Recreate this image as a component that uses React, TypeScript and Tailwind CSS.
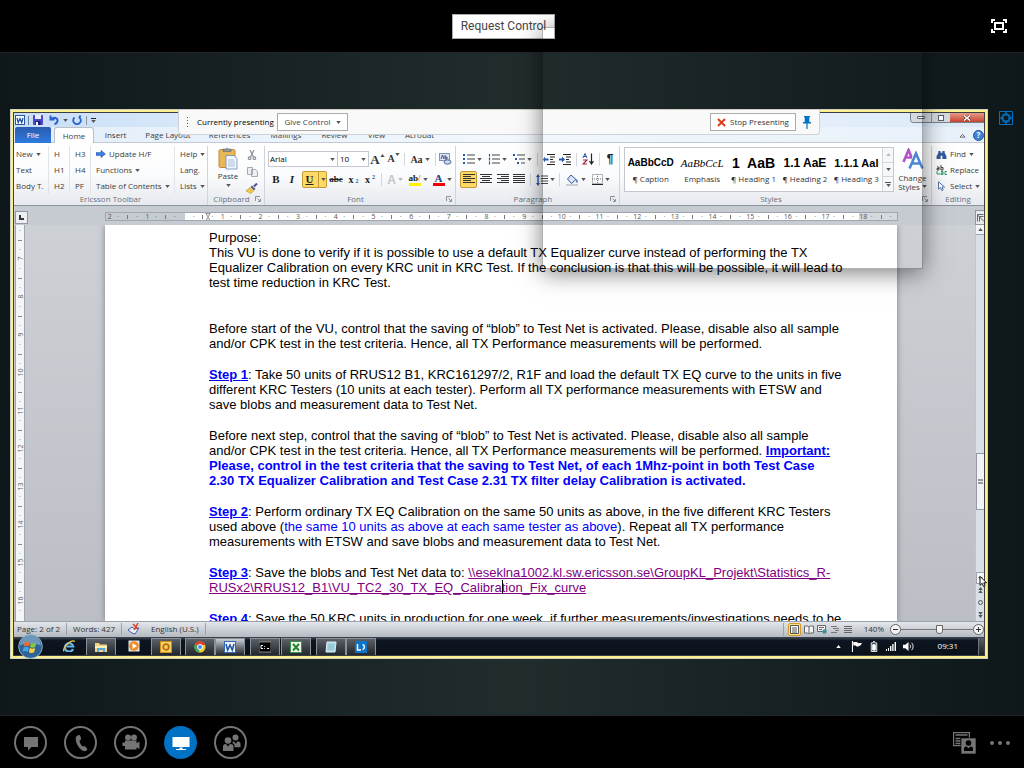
import type { ReactNode } from "react";

const UI = "font-['Open_Sans','Noto_Sans',sans-serif]";

function Caret({ className = "" }: { className?: string }) {
  return (
    <svg viewBox="0 0 6 4" className={`h-[3px] w-[5px] shrink-0 fill-[#555] ${className}`} aria-hidden="true">
      <path d="M0 0h6L3 4z" />
    </svg>
  );
}

function Launcher() {
  return (
    <svg viewBox="0 0 6 6" className="mr-[3px] size-[6px]" fill="none" stroke="#8b919b" aria-hidden="true">
      <path d="M.5 5V.5H5M2.500 2.500l2.500 2.500M5.500 3v2.500H3" />
    </svg>
  );
}

function Sep() {
  return <span className="mx-[3px] h-[13px] w-px shrink-0 bg-[#d3d7dd]" />;
}

function Tool({ label, className = "", children }: { label: string; className?: string; children: ReactNode }) {
  return (
    <button type="button" aria-label={label} className={`flex h-[17px] shrink-0 items-center justify-center gap-[2px] ${className}`}>
      {children}
    </button>
  );
}

function Group({ name, className = "", launcher = false, children }: { name: string; className?: string; launcher?: boolean; children: ReactNode }) {
  return (
    <section className={`flex flex-col border-r border-[#d0d4da] ${className}`}>
      <div className="h-[47px]">{children}</div>
      <div className="flex h-[11px] items-center text-[8px] leading-[11px] text-[#6b717c]">
        <span className="flex-1 text-center">{name}</span>
        {launcher && <Launcher />}
      </div>
    </section>
  );
}

function MacroColumn({ items, className = "" }: { items: { t: string; menu?: boolean; arrow?: boolean }[]; className?: string }) {
  return (
    <div className={`flex shrink-0 flex-col ${className}`}>
      {items.map((i) => (
        <button key={i.t} type="button" className="flex h-[16px] items-center gap-[3px] text-left text-[8px] whitespace-nowrap text-[#3b3b3b]">
          {i.arrow && (
            <svg viewBox="0 0 10 8" className="h-[8px] w-[10px]" aria-hidden="true">
              <path d="M0 2.500h5V.3L9.500 4 5 7.700V5.500H0z" fill="#3f7be0" stroke="#2a5db8" strokeWidth=".5" />
            </svg>
          )}
          {i.t}
          {i.menu && <Caret />}
        </button>
      ))}
    </div>
  );
}

function Lines({ widths, align = "left" }: { widths: number[]; align?: "left" | "center" | "right" }) {
  return (
    <svg viewBox="0 0 12 11" className="h-[11px] w-[12px]" fill="#333" aria-hidden="true">
      {widths.map((w, i) => (
        <rect key={i} x={align === "left" ? 0 : align === "center" ? (12 - w) / 2 : 12 - w} y={i * 2} width={w} height="1" />
      ))}
    </svg>
  );
}

function ListIcon({ kind }: { kind: "bullet" | "number" | "multi" }) {
  return (
    <svg viewBox="0 0 12 11" className="h-[11px] w-[12px]" aria-hidden="true">
      {[0, 1, 2].map((i) => (
        <g key={i}>
          {kind === "bullet" && <rect x="0" y={i * 4} width="2" height="2" fill="#2b57a8" />}
          {kind === "number" && <path d={`M1.500 ${i * 4 - 0.5}v3`} stroke="#2b57a8" strokeWidth="1.200" />}
          {kind === "multi" && <rect x={i * 2} y={i * 4} width="2" height="2" fill="#2b57a8" />}
          <rect x={kind === "multi" ? 4 + i * 2 : 4} y={i * 4 + 0.5} width={kind === "multi" ? 8 - i * 2 : 8} height="1" fill="#444" />
        </g>
      ))}
    </svg>
  );
}

function Indent({ dir }: { dir: "in" | "out" }) {
  return (
    <svg viewBox="0 0 12 11" className="h-[11px] w-[12px]" aria-hidden="true">
      <path d="M4 .5h8M7 3h5M7 5.500h3M7 8h5M4 10.500h8" stroke="#222" strokeWidth="1.200" />
      <path d={dir === "out" ? "M5.500 4.500H2V2.500L0 5.500l2 3v-2h3.500z" : "M0 4.500h3V2.500l3 3-3 3v-2H0z"} fill="#2b57a8" />
    </svg>
  );
}

function TitleBar() {
  return (
    <div className="flex h-[14px] items-center bg-linear-to-r from-[#c8def6] via-[#f3f8fd] to-[#dbe9f8] pl-px">
      <svg viewBox="0 0 10 10" className="size-[10px]" aria-hidden="true">
        <rect x=".5" y=".5" width="9" height="9" fill="#fff" stroke="#2b57a8" />
        <path d="M2 3l1.200 4.500L5 3.500l1.700 4L8 3" fill="none" stroke="#1d4fa5" strokeWidth="1.300" />
      </svg>
      <span className="mx-[3px] h-[9px] w-px bg-[#6d7f99]" />
      <button type="button" aria-label="Save" className="mx-px">
        <svg viewBox="0 0 10 10" className="size-[10px]" aria-hidden="true">
          <rect width="10" height="10" rx="1" fill="#4a48c8" />
          <rect x="2" width="6" height="4" fill="#e9eefb" />
          <rect x="2.500" y="6" width="5" height="4" fill="#20206a" />
          <rect x="3" y="7" width="2" height="3" fill="#fff" />
        </svg>
      </button>
      <button type="button" aria-label="Undo" className="ml-[5px] flex items-center gap-[4px]">
        <svg viewBox="0 0 10 10" className="size-[10px]" fill="none" stroke="#2a62d0" strokeWidth="2" aria-hidden="true">
          <path d="M1.500 .5v4H5.500M2 4.200C5 1.500 9 3 8.500 6c-.3 1.600-1.500 2.600-3 3.200" />
        </svg>
        <Caret className="fill-[#222]" />
      </button>
      <button type="button" aria-label="Repeat" className="ml-[4px]">
        <svg viewBox="0 0 10 10" className="size-[10px]" fill="none" stroke="#2a62d0" strokeWidth="1.800" aria-hidden="true">
          <path d="M2.500 2.500A3.800 3.800 0 1 0 7.500 2.500M8.500 0.500L7 3.500" />
        </svg>
      </button>
      <span className="mx-[4px] h-[9px] w-px bg-[#8896aa]" />
      <button type="button" aria-label="Customize toolbar" className="flex flex-col items-center gap-px">
        <span className="h-px w-[5px] bg-[#222]" />
        <Caret className="fill-[#222]" />
      </button>
      <div className="ml-auto flex h-[10px] self-start overflow-hidden rounded-bl-[4px] border-b border-l border-[#7b7f87]">
        <button type="button" aria-label="Minimize" className="flex w-[20px] items-center justify-center bg-[#d5dae2]">
          <span className="h-[3px] w-[8px] rounded-[1px] border border-[#59606b] bg-white" />
        </button>
        <button type="button" aria-label="Restore" className="flex w-[19px] items-center justify-center border-l border-[#9298a3] bg-[#d5dae2]">
          <span className="size-[6px] border border-[#59606b] bg-white" />
        </button>
        <button type="button" aria-label="Close" className="flex w-[34px] items-center justify-center bg-linear-to-b from-[#e59a8b] to-[#c4432f]">
          <svg viewBox="0 0 8 6" className="h-[6px] w-[8px]" aria-hidden="true">
            <path d="M1 .5l6 5M7 .5l-6 5" stroke="#5d2018" strokeWidth="2.600" />
            <path d="M1 .5l6 5M7 .5l-6 5" stroke="#fff" strokeWidth="1.600" />
          </svg>
        </button>
      </div>
    </div>
  );
}

function Tabs() {
  const tabs: [string, string][] = [
    ["Insert", "w-[43px]"],
    ["Page Layout", "w-[62px]"],
    ["References", "w-[61px]"],
    ["Mailings", "w-[52px]"],
    ["Review", "w-[45px]"],
    ["View", "w-[39px]"],
    ["Acrobat", "w-[47px]"],
  ];
  return (
    <nav className="flex h-[16px] bg-linear-to-r from-[#e3eefa] via-[#f1f7fd] to-[#e8f0f9] text-[8px] text-[#3b3b3b] shadow-[inset_0_-1px_0_#c3cad3]">
      <button type="button" className="ml-px w-[36px] rounded-t-[2px] bg-linear-to-b from-[#2a5cae] to-[#2d7be0] text-white">File</button>
      <button type="button" className="ml-[3px] w-[40px] rounded-t-[3px] border border-b-0 border-[#b9c0ca] bg-white">Home</button>
      {tabs.map(([t, w]) => (
        <button key={t} type="button" className={`${w} whitespace-nowrap`}>{t}</button>
      ))}
      <span className="ml-auto flex items-center gap-[7px]">
        <svg viewBox="0 0 8 6" className="h-[5px] w-[7px]" fill="none" stroke="#555" aria-hidden="true">
          <path d="M1 5L4 1.500 7 5z" />
        </svg>
        <button type="button" aria-label="Help" className="flex size-[11px] items-center justify-center rounded-full border border-[#1f5aa8] bg-[#3d82d8] text-[8px] font-bold text-white">?</button>
      </span>
    </nav>
  );
}

const styleItems = [
  { s: "AaBbCcD", n: "¶ Caption", c: "text-[10px] font-bold font-['Liberation_Sans',sans-serif]" },
  { s: "AaBbCcL", n: "Emphasis", c: "text-[11px] italic font-['Liberation_Serif',serif]" },
  { s: "1  AaB", n: "¶ Heading 1", c: "text-[14px] font-bold font-['Liberation_Sans',sans-serif]" },
  { s: "1.1 AaE", n: "¶ Heading 2", c: "text-[12px] font-bold font-['Liberation_Sans',sans-serif]" },
  { s: "1.1.1 Aal", n: "¶ Heading 3", c: "text-[11px] font-bold font-['Liberation_Sans',sans-serif]" },
];

function Ribbon() {
  return (
    <div className="flex h-[63px] border-b border-[#8d939d] bg-linear-to-b from-white via-[#fbfcfd] to-[#e6e9ee] pt-[3px]">
      <Group name="Ericsson Toolbar" className="w-[194px]">
        <div className="flex gap-[5px] pl-[2px]">
          <MacroColumn className="w-[33px] border-r border-[#e0e3e8]" items={[{ t: "New", menu: true }, { t: "Text" }, { t: "Body T." }]} />
          <MacroColumn className="w-[16px] border-r border-[#e0e3e8]" items={[{ t: "H" }, { t: "H1" }, { t: "H2" }]} />
          <MacroColumn className="w-[16px] border-r border-[#e0e3e8]" items={[{ t: "H3" }, { t: "H4" }, { t: "PF" }]} />
          <MacroColumn className="w-[79px] border-r border-[#e0e3e8]" items={[{ t: "Update H/F", arrow: true }, { t: "Functions", menu: true }, { t: "Table of Contents", menu: true }]} />
          <MacroColumn items={[{ t: "Help", menu: true }, { t: "Lang." }, { t: "Lists", menu: true }]} />
        </div>
      </Group>

      <Group name="Clipboard" launcher className="w-[57px]">
        <div className="flex justify-between pr-[6px] pl-[8px]">
          <button type="button" className="flex w-[24px] flex-col items-center text-[8px] leading-[11px] text-[#3b3b3b]">
            <svg viewBox="0 0 20 22" className="mt-px h-[23px] w-[20px]" aria-hidden="true">
              <rect x="1" y="2" width="16" height="18" rx="1.500" fill="#e9b856" stroke="#b98a35" />
              <path d="M5 4V1.500h2.500a1.800 1.800 0 0 1 3 0H13V4z" fill="#8f949c" stroke="#666" strokeWidth=".6" />
              <path d="M8 8h8l3 3v10.500H8z" fill="#f2f6fc" stroke="#6c8bb8" strokeWidth=".8" />
              <path d="M10 12.500h6M10 14.500h7M10 16.500h7M10 18.500h7" stroke="#90a9cf" strokeWidth=".7" />
            </svg>
            Paste
            <Caret className="mt-[3px]" />
          </button>
          <span className="flex flex-col items-center">
            <Tool label="Cut">
              <svg viewBox="0 0 10 10" className="size-[10px]" fill="none" stroke="#8b919a" strokeWidth="1.200" aria-hidden="true">
                <path d="M3 0l3.500 7M7 0L3.500 7" />
                <circle cx="2.600" cy="8.200" r="1.300" />
                <circle cx="7.400" cy="8.200" r="1.300" />
              </svg>
            </Tool>
            <Tool label="Copy">
              <svg viewBox="0 0 11 10" className="h-[10px] w-[11px]" fill="#eceef1" stroke="#a5aab2" aria-hidden="true">
                <path d="M.5.500h5v7h-5zM4.500 2.500h4l2 2v5h-6z" />
              </svg>
            </Tool>
            <Tool label="Format Painter">
              <svg viewBox="0 0 12 11" className="h-[11px] w-[12px]" aria-hidden="true">
                <path d="M8 3.500L11 .5" stroke="#4b4fa0" strokeWidth="2" />
                <path d="M6 2.500l3.500 3.500-1.500 1.500L4.500 4z" fill="#5a5f70" />
                <path d="M4 4.500L7.500 8 5 10.500 0 8z" fill="#efc94f" stroke="#b99325" strokeWidth=".6" />
              </svg>
            </Tool>
          </span>
        </div>
      </Group>

      <Group name="Font" launcher className="w-[191px]">
        <div className="flex flex-col gap-[4px] pt-[5px] pl-[3px]">
          <div className="flex h-[16px] items-center">
            <span className="relative flex">
              <select aria-label="Font" defaultValue="Arial" className="h-[16px] w-[70px] appearance-none border border-[#c3c8d0] bg-white pl-px text-[8px] text-black">
                <option>Arial</option>
              </select>
              <Caret className="pointer-events-none absolute top-[7px] right-[3px]" />
            </span>
            <span className="relative flex">
              <select aria-label="Font size" defaultValue="10" className="h-[16px] w-[31px] appearance-none border border-l-0 border-[#c3c8d0] bg-white pl-[2px] text-[8px] text-black">
                <option>10</option>
              </select>
              <Caret className="pointer-events-none absolute top-[7px] right-[3px]" />
            </span>
            <Tool label="Grow Font" className="w-[17px] font-['Liberation_Serif',serif] text-[13px] font-bold text-[#333]">
              <span className="flex items-start leading-[13px]">A<Caret className="mt-px rotate-180 fill-[#2b57a8]" /></span>
            </Tool>
            <Tool label="Shrink Font" className="w-[15px] font-['Liberation_Serif',serif] text-[10px] font-bold text-[#333]">
              <span className="flex items-start leading-[12px]">A<Caret className="fill-[#2b57a8]" /></span>
            </Tool>
            <Sep />
            <Tool label="Change Case" className="w-[24px] font-['Liberation_Serif',serif] text-[10px] font-bold text-[#333]">Aa<Caret /></Tool>
            <Sep />
            <Tool label="Clear Formatting">
              <svg viewBox="0 0 13 12" className="h-[12px] w-[13px]" aria-hidden="true">
                <rect x=".5" y=".5" width="10" height="7" fill="#dce6f5" stroke="#7d93bb" />
                <path d="M2 6l1.500-4L5 6M6 2v4h2V4H6" fill="none" stroke="#2c4270" strokeWidth=".9" />
                <ellipse cx="8.500" cy="9" rx="3.500" ry="2.200" fill="#c9d8ee" stroke="#50679a" />
              </svg>
            </Tool>
          </div>
          <div className="flex h-[17px] items-center font-['Liberation_Serif',serif] text-[10px] font-bold text-[#222]">
            <Tool label="Bold" className="w-[16px] text-[11px]">B</Tool>
            <Tool label="Italic" className="w-[16px] text-[11px] italic">I</Tool>
            <Tool label="Underline" className="ml-[2px] w-[25px] rounded-[2px] border border-[#c29a35] bg-[#ffd965] text-[11px] underline">
              <span className="w-[13px]">U</span>
              <span className="h-full w-px bg-[#c29a35]" />
              <Caret />
            </Tool>
            <Tool label="Strikethrough" className="w-[18px] text-[9px] line-through">abc</Tool>
            <Tool label="Subscript" className="w-[17px]">x<span className="pt-[4px] text-[6px] text-[#2b57a8]">2</span></Tool>
            <Tool label="Superscript" className="w-[16px]">x<span className="pb-[5px] text-[6px] text-[#2b57a8]">2</span></Tool>
            <Sep />
            <Tool label="Text Effects" className="w-[20px] font-['Liberation_Sans',sans-serif] text-[12px] text-[#c2c6cd]">A<Caret className="fill-[#b5b9c0]" /></Tool>
            <Tool label="Highlight" className="w-[26px]">
              <span className="flex flex-col items-center">
                <span className="text-[9px] leading-[8px]">ab<span className="text-[#b08a20]">/</span></span>
                <span className="mt-px h-[3px] w-[12px] bg-[#fff200]" />
              </span>
              <Caret />
            </Tool>
            <Tool label="Font Color" className="w-[22px]">
              <span className="flex flex-col items-center">
                <span className="text-[11px] leading-[9px] text-[#243f7c]">A</span>
                <span className="h-[3px] w-[12px] bg-[#f00000]" />
              </span>
              <Caret />
            </Tool>
          </div>
        </div>
      </Group>

      <Group name="Paragraph" launcher className="w-[164px]">
        <div className="flex flex-col gap-[4px] pt-[5px] pl-[4px]">
          <div className="flex h-[16px] items-center">
            <Tool label="Bullets" className="w-[25px]"><ListIcon kind="bullet" /><Caret /></Tool>
            <Tool label="Numbering" className="w-[25px]"><ListIcon kind="number" /><Caret /></Tool>
            <Tool label="Multilevel List" className="w-[24px]"><ListIcon kind="multi" /><Caret /></Tool>
            <Sep />
            <Tool label="Decrease Indent" className="w-[16px]"><Indent dir="out" /></Tool>
            <Tool label="Increase Indent" className="w-[16px]"><Indent dir="in" /></Tool>
            <Sep />
            <Tool label="Sort" className="w-[16px]">
              <svg viewBox="0 0 12 12" className="size-[12px]" fill="none" aria-hidden="true">
                <path d="M1 5l2-4.500L5 5M1.700 3.500h2.600" stroke="#2b57a8" />
                <path d="M1 7h4l-4 4h4" stroke="#a02c3c" strokeWidth="1.200" />
                <path d="M9.500.5v10M7.500 8l2 3 2-3" stroke="#222" strokeWidth="1.200" />
              </svg>
            </Tool>
            <Sep />
            <Tool label="Show marks" className="w-[14px] font-['Liberation_Sans',sans-serif] text-[12px] font-bold text-[#222]">¶</Tool>
          </div>
          <div className="flex h-[17px] items-center">
            <Tool label="Align Left" className="w-[17px] rounded-[2px] border border-[#c29a35] bg-[#ffd965]"><Lines widths={[12, 8, 12, 8, 12]} /></Tool>
            <Tool label="Center" className="w-[17px]"><Lines widths={[12, 8, 12, 8, 12]} align="center" /></Tool>
            <Tool label="Align Right" className="w-[17px]"><Lines widths={[12, 8, 12, 8, 12]} align="right" /></Tool>
            <Tool label="Justify" className="w-[16px]"><Lines widths={[12, 12, 12, 12, 12]} /></Tool>
            <Sep />
            <Tool label="Line Spacing" className="w-[22px]">
              <svg viewBox="0 0 12 12" className="size-[12px]" aria-hidden="true">
                <path d="M5 2h7M5 4.500h7M5 7h7M5 9.500h7" stroke="#444" />
                <path d="M2 0L0 3h1.300v6H0l2 3 2-3H2.700V3H4z" fill="#2b57a8" />
              </svg>
              <Caret />
            </Tool>
            <Sep />
            <Tool label="Shading" className="w-[25px]">
              <svg viewBox="0 0 13 12" className="h-[12px] w-[13px]" aria-hidden="true">
                <path d="M5 1l5 4.500-4.500 4L1.500 5z" fill="#dbe7f8" stroke="#35599c" />
                <path d="M10.500 5c1.500 1.500 1.500 3 .5 4-1-1-1-2.500-.5-4z" fill="#2b57a8" />
                <rect x="0" y="10" width="12" height="2" fill="#c9cdd4" />
              </svg>
              <Caret />
            </Tool>
            <Tool label="Borders" className="w-[25px]">
              <svg viewBox="0 0 11 11" className="size-[11px]" fill="none" stroke="#777" aria-hidden="true">
                <path d="M.5.500h10v9H.5zM5.500 0v10M0 5h11" strokeDasharray="1 1" />
                <path d="M0 10.500h11" stroke="#222" />
              </svg>
              <Caret />
            </Tool>
          </div>
        </div>
      </Group>

      <Group name="Styles" launcher className="min-w-0 flex-1">
        <div className="flex pt-px pl-[4px]">
          <div className="flex h-[45px] min-w-0 flex-1 border border-[#c3c8d0] bg-white">
            {styleItems.map((i) => (
              <button key={i.n} type="button" className="flex flex-1 flex-col items-center overflow-hidden whitespace-pre text-black">
                <span className={`mt-[6px] h-[18px] leading-[18px] ${i.c}`}>{i.s}</span>
                <span className="text-[8px] leading-[14px] text-[#333]">{i.n}</span>
              </button>
            ))}
            <span className="flex w-[11px] flex-col border-l border-[#d3d7dd] bg-[#f5f7f9]">
              <button type="button" aria-label="Previous styles" className="flex flex-1 items-center justify-center"><Caret className="rotate-180 fill-[#b8bcc4]" /></button>
              <button type="button" aria-label="Next styles" className="flex flex-1 items-center justify-center border-y border-[#d3d7dd]"><Caret /></button>
              <button type="button" aria-label="More styles" className="flex flex-1 flex-col items-center justify-center gap-px"><span className="h-px w-[6px] bg-[#555]" /><Caret /></button>
            </span>
          </div>
          <button type="button" className="flex w-[37px] flex-col items-center text-[8px] leading-[9px] text-[#3b3b3b]">
            <svg viewBox="0 0 22 22" className="mt-px mb-[3px] size-[22px]" fill="none" strokeWidth="2.600" aria-hidden="true">
              <path d="M1.500 14L6.500 2l5 12M3.500 9.500h6" stroke="#b454c8" />
              <path d="M7.500 20.500L14 5.500l6.500 15M10 15.500h8" stroke="#fff" strokeWidth="4" />
              <path d="M7.500 20.500L14 5.500l6.500 15M10 15.500h8" stroke="#4d86d6" />
            </svg>
            <span>Change</span>
            <span className="flex items-center gap-[2px]">Styles<Caret /></span>
          </button>
        </div>
      </Group>

      <section className="flex w-[52px] flex-col">
        <div className="h-[47px] pl-[4px] text-[8px] text-[#3b3b3b]">
          <button type="button" className="flex h-[16px] items-center gap-[3px]">
            <svg viewBox="0 0 11 10" className="h-[9px] w-[11px]" fill="#35599c" aria-hidden="true">
              <path d="M2 1h2.500v2h2V1H9v2l2 4v3H6.500V6.500h-2V10H0V7l2-4z" />
            </svg>
            Find <Caret />
          </button>
          <button type="button" className="flex h-[16px] items-center gap-[3px]">
            <svg viewBox="0 0 11 10" className="h-[10px] w-[11px]" fill="none" aria-hidden="true">
              <path d="M1 2h2v3H1V3.500h2M5 0v5h2V2.500H5" stroke="#444" />
              <path d="M1 6v3h3M5 6.500h2v3H5V8h2M11 6.500H9v3h2" stroke="#2d9a6a" />
            </svg>
            Replace
          </button>
          <button type="button" className="flex h-[16px] items-center gap-[3px]">
            <svg viewBox="0 0 11 10" className="h-[10px] w-[11px]" fill="#fff" stroke="#5773a8" aria-hidden="true">
              <path d="M2.500.8v7.400l2-1.700 1.200 3 1.500-.6L6 6h2.500z" />
            </svg>
            Select <Caret />
          </button>
        </div>
        <div className="h-[11px] text-center text-[8px] leading-[11px] text-[#6b717c]">Editing</div>
      </section>
    </div>
  );
}

function HorizontalRuler() {
  const cells = Array.from({ length: 21 }, (_, i) => i - 2);
  return (
    <div className="flex h-[19px] bg-[#c6cad1]">
      <span className="mt-[5px] ml-px flex h-[13px] w-[13px] items-center justify-center border border-[#9298a3] bg-[#eceef1]">
        <span className="size-[5px] border-b-2 border-l-2 border-[#333]" />
      </span>
      <div className="relative mt-[6px] mr-[77px] ml-[77px] flex h-[9px] flex-1 overflow-hidden border border-[#a0a6b0] bg-linear-to-r from-[#c6cad1] from-10% via-white via-10% to-white text-[7px] leading-[8px] text-[#555]">
        {cells.map((n) => (
          <span key={n} className={`flex min-w-0 flex-1 items-center ${n === 18 ? "bg-[#d5d8dd]" : ""}`}>
            <span className="flex w-1/5 justify-center">{n === 0 ? "" : Math.abs(n)}</span>
            <span className="flex w-1/4 justify-center">·</span>
            <span className="flex w-1/4 justify-center"><span className="h-[4px] w-px bg-[#777]" /></span>
            <span className="flex w-1/4 justify-center">·</span>
          </span>
        ))}
        <svg viewBox="0 0 8 12" className="absolute top-0 left-[98px] h-[9px] w-[8px]" fill="#eee" stroke="#777" aria-hidden="true">
          <path d="M1 .5h6L4 5zM1 10.500L4 5l3 5.500z" />
        </svg>
      </div>
      <button type="button" aria-label="View ruler" className="mt-[4px] flex h-[15px] w-[9px] items-center justify-center border-y border-l border-[#9298a3] bg-[#e6e9ee]">
        <svg viewBox="0 0 7 8" className="h-[8px] w-[7px]" fill="none" stroke="#666" aria-hidden="true">
          <path d="M.5 7.500V.5h6M2.500 7.500v-5h4M0 .5l7 7" />
        </svg>
      </button>
    </div>
  );
}

function VerticalRuler() {
  const marks = [7, 8, 9, 10, 11, 12, 13, 14, 15, 16];
  return (
    <div className="flex w-[10px] shrink-0 flex-col overflow-hidden border-x border-[#a0a6b0] bg-[#f4f5f7] text-[7px] leading-[7px] text-[#666]">
      {marks.map((n) => (
        <span key={n} className="flex h-[38px] shrink-0 flex-col items-center">
          <span className="flex h-[11px] items-center">·</span>
          <span className="flex h-[9px] items-center"><span className="h-px w-[4px] bg-[#888]" /></span>
          <span className="flex h-[9px] items-center">·</span>
          <span className="flex h-[9px] -rotate-90 items-center">{n}</span>
        </span>
      ))}
      <span className="flex h-[11px] shrink-0 items-center justify-center">·</span>
    </div>
  );
}

function StepLabel({ n }: { n: number }) {
  return <b className="text-[#0000ff] underline">Step {n}</b>;
}

function DocumentText() {
  return (
    <article className="min-w-0 flex-1 overflow-hidden bg-white pt-[5px] pl-[104px] font-['Liberation_Sans',Arial,sans-serif] text-[13px] leading-[15px] whitespace-nowrap text-black shadow-[0_0_6px_#7d828a]">
      <p className="mb-[31px]">
        Purpose:<br />
        This VU is done to verify if it is possible to use a default TX Equalizer curve instead of performing the TX<br />
        Equalizer Calibration on every KRC unit in KRC Test. If the conclusion is that this will be possible, it will lead to<br />
        test time reduction in KRC Test.
      </p>
      <p className="mb-[16px]">
        Before start of the VU, control that the saving of “blob” to Test Net is activated. Please, disable also all sample<br />
        and/or CPK test in the test criteria. Hence, all TX Performance measurements will be performed.
      </p>
      <p className="mb-[16px]">
        <StepLabel n={1} />: Take 50 units of RRUS12 B1, KRC161297/2, R1F and load the default TX EQ curve to the units in five<br />
        different KRC Testers (10 units at each tester). Perform all TX performance measurements with ETSW and<br />
        save blobs and measurement data to Test Net.
      </p>
      <p className="mb-[16px]">
        Before next step, control that the saving of “blob” to Test Net is activated. Please, disable also all sample<br />
        and/or CPK test in the test criteria. Hence, all TX Performance measurements will be performed.{" "}
        <b className="text-[#0000ff] underline">Important:</b><br />
        <b className="text-[#0000ff]">
          Please, control in the test criteria that the saving to Test Net, of each 1Mhz-point in both Test Case<br />
          2.30 TX Equalizer Calibration and Test Case 2.31 TX filter delay Calibration is activated.
        </b>
      </p>
      <p className="mb-[16px]">
        <StepLabel n={2} />: Perform ordinary TX EQ Calibration on the same 50 units as above, in the five different KRC Testers<br />
        used above (<span className="text-[#0000ff]">the same 10 units as above at each same tester as above</span>). Repeat all TX performance<br />
        measurements with ETSW and save blobs and measurement data to Test Net.
      </p>
      <p className="mb-[16px]">
        <StepLabel n={3} />: Save the blobs and Test Net data to:{" "}
        <a href="#share" className="text-[#800080] underline">
          \\eseklna1002.kl.sw.ericsson.se\GroupKL_Projekt\Statistics_R-<br />
          RUSx2\RRUS12_B1\VU_TC2_30_TX_EQ_Calibra<span className="relative">t<span className="absolute top-0 left-0 h-[14px] w-px bg-black" /></span>ion_Fix_curve
        </a>
      </p>
      <p>
        <StepLabel n={4} />: Save the 50 KRC units in production for one week, if further measurements/investigations needs to be
      </p>
    </article>
  );
}

function ScrollBar() {
  return (
    <div className="flex w-[9px] shrink-0 flex-col items-center border-l border-[#c0c5cd] bg-[#dbe0e8]">
      <button type="button" aria-label="Scroll up" className="flex h-[10px] w-full items-center justify-center border-b border-[#a0a6b0] bg-[#f3f4f6]"><Caret className="rotate-180 fill-[#222]" /></button>
      <span className="h-[218px]" />
      <span className="flex h-[57px] w-full flex-col items-center justify-center gap-px border border-r-0 border-[#959ba6] bg-[#f1f3f6]">
        <span className="h-[2px] w-[5px] bg-[#999]" />
        <span className="h-[2px] w-[5px] bg-[#999]" />
      </span>
      <span className="flex-1" />
      <button type="button" aria-label="Scroll down" className="flex h-[12px] w-full items-center justify-center border border-r-0 border-[#a0a6b0] bg-[#f3f4f6]"><Caret className="fill-[#222]" /></button>
      <button type="button" aria-label="Previous page" className="flex h-[12px] flex-col items-center justify-center"><Caret className="rotate-180 fill-[#333]" /><Caret className="rotate-180 fill-[#333]" /></button>
      <button type="button" aria-label="Browse object" className="flex h-[12px] items-center"><span className="size-[5px] rounded-full border border-[#555]" /></button>
      <button type="button" aria-label="Next page" className="flex h-[13px] flex-col items-center justify-center"><Caret className="fill-[#333]" /><Caret className="fill-[#333]" /></button>
    </div>
  );
}

function StatusBar() {
  return (
    <div className="flex h-[16px] items-center border-t border-[#9ba1ab] bg-linear-to-b from-[#e3e6ea] to-[#b5bac2] pb-px text-[8px] whitespace-nowrap text-[#333]">
      <span className="w-[53px] border-r border-[#9ba1ab] pl-[3px]">Page: 2 of 2</span>
      <span className="w-[55px] border-r border-[#9ba1ab] pl-[6px]">Words: 427</span>
      <svg viewBox="0 0 14 12" className="ml-[5px] h-[12px] w-[14px]" aria-hidden="true">
        <path d="M1 7l4-3 3 2 4-1-4 6-3-1z" fill="#e9eefb" stroke="#3c5fae" />
        <path d="M6 1l5 5M11 0L7 7" stroke="#e0402c" strokeWidth="1.500" />
      </svg>
      <span className="ml-[10px] w-[55px] border-r border-[#9ba1ab]">English (U.S.)</span>
      <div className="ml-auto flex items-center gap-[3px] border-l border-[#9ba1ab] pl-[4px]">
        <button type="button" aria-label="Print Layout" className="flex h-[13px] w-[13px] items-center justify-center rounded-[2px] border border-[#d59a20] bg-[#ffe08a]">
          <svg viewBox="0 0 9 9" className="size-[9px]" fill="#fff" stroke="#555" aria-hidden="true"><path d="M.5.500h8v8h-8zM2 3h5M2 5h5M2 7h5" /></svg>
        </button>
        <button type="button" aria-label="Full Screen Reading">
          <svg viewBox="0 0 10 9" className="h-[9px] w-[10px]" fill="#f4f4f4" stroke="#666" aria-hidden="true"><path d="M.5 1h3L5 2l1.500-1h3v7h-3L5 9 3.500 8h-3zM5 2v6" /></svg>
        </button>
        <button type="button" aria-label="Web Layout">
          <svg viewBox="0 0 10 9" className="h-[9px] w-[10px]" aria-hidden="true"><path d="M.5.500h8v6h-8zM2 2.500h5M2 4.500h3" fill="#f4f4f4" stroke="#666" /><circle cx="7.500" cy="6.500" r="2.300" fill="#3f8f9c" /></svg>
        </button>
        <button type="button" aria-label="Outline">
          <svg viewBox="0 0 10 9" className="h-[9px] w-[10px]" stroke="#777" aria-hidden="true"><path d="M1 1.500h6M3 3.500h6M5 5.500h4M1 7.500h6" /></svg>
        </button>
        <button type="button" aria-label="Draft">
          <svg viewBox="0 0 10 9" className="h-[9px] w-[10px]" stroke="#666" aria-hidden="true"><path d="M1 1.500h8M1 3.500h8M1 5.500h8M1 7.500h8" /></svg>
        </button>
      </div>
      <span className="w-[32px] pr-px text-right">140%</span>
      <button type="button" aria-label="Zoom out" className="ml-[5px] flex size-[11px] items-center justify-center rounded-full border border-[#666] bg-[#f4f4f4]"><span className="h-px w-[5px] bg-[#333]" /></button>
      <input type="range" aria-label="Zoom" min="10" max="100" defaultValue="59" className="h-[9px] w-[72px] appearance-none bg-[linear-gradient(transparent_4px,#777_4px,#777_5px,transparent_5px)] [&::-webkit-slider-thumb]:h-[9px] [&::-webkit-slider-thumb]:w-[7px] [&::-webkit-slider-thumb]:appearance-none [&::-webkit-slider-thumb]:rounded-b-[3px] [&::-webkit-slider-thumb]:border [&::-webkit-slider-thumb]:border-[#666] [&::-webkit-slider-thumb]:bg-[#f4f4f4]" />
      <button type="button" aria-label="Zoom in" className="flex size-[11px] items-center justify-center rounded-full border border-[#666] bg-[#f4f4f4]">
        <svg viewBox="0 0 5 5" className="size-[5px]" stroke="#333" aria-hidden="true"><path d="M0 2.500h5M2.500 0v5" /></svg>
      </button>
    </div>
  );
}

function TaskButton({ label, framed = true, className = "", children }: { label: string; framed?: boolean; className?: string; children: ReactNode }) {
  return (
    <button
      type="button"
      aria-label={label}
      className={`flex h-[17px] items-center justify-center ${framed ? "w-[30px] border border-b-0 border-[#8a9096] bg-linear-to-b from-[#5b6167] to-[#23282e]" : "w-[34px]"} ${className}`}
    >
      <svg viewBox="0 0 12 12" className="size-[12px]" aria-hidden="true">{children}</svg>
    </button>
  );
}

function TaskBar() {
  return (
    <div className="flex h-[18px] items-center bg-linear-to-b from-[#39414c] from-5% via-[#0d1520] via-20% to-[#0a111a]">
      <button type="button" aria-label="Start" className="relative z-10 ml-[4px] size-[25px]">
        <svg viewBox="0 0 26 26" className="size-[25px]" aria-hidden="true">
          <circle cx="13" cy="13" r="12.300" fill="#2f6496" stroke="#8fb4d0" />
          <path d="M2 12a11 11 0 0 1 22 0c-6-3-16-3-22 0z" fill="#86acc9" opacity=".7" />
          <path d="M7 8.500c2-1 3.500-1 5.500 0l-1 4.500c-2-1-3.500-1-5.500 0z" fill="#ef6a2e" />
          <path d="M13.500 9c2 1 3.500 1 5.500 0l-1 4.500c-2 1-3.500 1-5.500 0z" fill="#8cc63e" />
          <path d="M5.800 14c2-1 3.500-1 5.500 0l-1 4.500c-2-1-3.500-1-5.500 0z" fill="#3fa6e8" />
          <path d="M12.300 14.500c2 1 3.500 1 5.500 0l-1 4.500c-2 1-3.500 1-5.500 0z" fill="#ffcf3a" />
        </svg>
      </button>
      <TaskButton label="Internet Explorer" framed={false} className="ml-[9px]">
        <path d="M10 9A4.200 4.200 0 1 1 10.200 6.500H3.500" fill="none" stroke="#5fb6ee" strokeWidth="2.200" />
        <path d="M1 11.500C-1 8 8-1 12 1.500" fill="none" stroke="#e9c54c" strokeWidth="1.200" />
      </TaskButton>
      <TaskButton label="Explorer">
        <path d="M0 2h4l1 1.500h7V11H0z" fill="#f0d57e" />
        <path d="M0 5h12v2H0z" fill="#fbf0bd" />
        <path d="M3 11V8h6v3" fill="none" stroke="#58a8dc" strokeWidth="2" />
      </TaskButton>
      <TaskButton label="Media Player" framed={false} className="ml-px">
        <rect x=".5" y=".5" width="11" height="11" fill="#dbe9f5" />
        <circle cx="6" cy="6" r="4.800" fill="#f08a1d" />
        <path d="M4.500 3v6L9 6z" fill="#fff" />
      </TaskButton>
      <TaskButton label="Outlook">
        <rect x=".5" y=".5" width="11" height="11" fill="#f7d268" stroke="#d18e1b" />
        <circle cx="6" cy="6" r="2.800" fill="none" stroke="#b96d0a" strokeWidth="1.800" />
      </TaskButton>
      <TaskButton label="Chrome" className="ml-[4px]">
        <circle cx="6" cy="6" r="5.500" fill="#f6cc33" />
        <path d="M6 6L1 3.500A5.500 5.500 0 0 1 11.200 4H6z" fill="#e0412f" />
        <path d="M6 6L1 3.500a5.500 5.500 0 0 0 4 8z" fill="#3fa652" />
        <circle cx="6" cy="6" r="2.500" fill="#4a8af0" stroke="#fff" />
      </TaskButton>
      <TaskButton label="Word" className="from-[#c9d0d8] to-[#7a828c]">
        <rect x=".5" y=".5" width="11" height="11" fill="#eef3fb" stroke="#3567b5" />
        <path d="M2 3l1.700 6L6 4l2.300 5L10 3" fill="none" stroke="#1d4fa5" strokeWidth="1.500" />
      </TaskButton>
      <TaskButton label="Command Prompt" className="ml-[5px]">
        <rect y="1" width="12" height="10" fill="#000" stroke="#aaa" strokeWidth=".7" />
        <path d="M4 4.500H2v3h2M5.500 5v.8M5.500 7v.8M8 7.500h2" fill="none" stroke="#fff" />
      </TaskButton>
      <TaskButton label="Excel" className="ml-px">
        <rect x=".5" y=".5" width="11" height="11" fill="#e9f6e4" stroke="#3b9448" />
        <path d="M3 3l6 6.500M9 3L3 9.500" stroke="#23803a" strokeWidth="1.900" />
      </TaskButton>
      <TaskButton label="Notepad" className="ml-[5px]">
        <path d="M2 1h9l-1 10H1z" fill="#a8d6e2" stroke="#dff0f4" />
        <path d="M3 4h6M3 6h6M3 8h6" stroke="#7fb2c4" strokeWidth=".7" />
      </TaskButton>
      <TaskButton label="Lync">
        <rect width="12" height="12" fill="#0b72c6" />
        <path d="M2.500 3v6H6M7.500 3.500C10 4 10 8 7.500 8.500" fill="none" stroke="#fff" strokeWidth="1.500" />
      </TaskButton>
      <div className="ml-auto flex items-center text-[8px] text-white">
        <Caret className="rotate-180 fill-white" />
        <svg viewBox="0 0 12 12" className="ml-[10px] size-[11px]" fill="#fff" aria-hidden="true"><path d="M1 0h1.200v12H1zM2.500 1h4l1 1.200H12L10.500 4.500 8 6H6L5 5H2.500z" /></svg>
        <svg viewBox="0 0 8 12" className="ml-[8px] h-[11px] w-[8px]" fill="none" stroke="#fff" aria-hidden="true"><path d="M1 2h6v9.500H1zM3 .5h2" /><path d="M2.500 4h3v6h-3z" fill="#fff" /></svg>
        <svg viewBox="0 0 10 10" className="ml-[8px] size-[10px]" fill="#fff" aria-hidden="true"><path d="M0 8h1v2H0zM2 7h1v3H2zM4 5h1.400v5H4zM6.200 3h1.400v7H6.200zM8.600 1H10v9H8.600z" /></svg>
        <svg viewBox="0 0 12 12" className="ml-[7px] size-[11px]" fill="#fff" stroke="#fff" aria-hidden="true"><path d="M0 4h2.500L6 1v10L2.500 8H0z" stroke="none" /><path d="M7.500 4c1 1 1 3 0 4M9.500 2c2 2 2 6 0 8" fill="none" /></svg>
        <time className="ml-[24px]">09:31</time>
        <span className="ml-[20px] h-[17px] w-[6px] border-l border-[#70767e] bg-linear-to-b from-[#5b6167] to-[#1d2228]" />
      </div>
    </div>
  );
}

function PresentingBar() {
  return (
    <div className="absolute inset-x-[167px] top-0 flex h-[25px] items-center rounded-b-[4px] border border-t-0 border-[#cfd2d6] bg-[#f9f9f9] px-[8px] text-[8px] text-[#222]">
      <span className="flex w-[2px] flex-col gap-[2px]" aria-hidden="true">
        {[0, 1, 2, 3].map((i) => <span key={i} className="size-px bg-[#555]" />)}
      </span>
      <span className="ml-[8px] w-[80px] whitespace-nowrap text-black">Currently presenting</span>
      <button type="button" className="flex h-[18px] w-[71px] items-center justify-center gap-[5px] border border-[#ababab] bg-white whitespace-nowrap text-[#444]">
        Give Control <Caret className="fill-[#333]" />
      </button>
      <button type="button" className="mr-[7px] ml-auto flex h-[18px] w-[86px] items-center justify-center gap-[4px] border border-[#ababab] bg-white whitespace-nowrap text-[#333]">
        <svg viewBox="0 0 9 9" className="size-[9px]" stroke="#dc3c20" strokeWidth="2" aria-hidden="true"><path d="M1 1l7 7M8 1L1 8" /></svg>
        Stop Presenting
      </button>
      <button type="button" aria-label="Pin">
        <svg viewBox="0 0 8 13" className="h-[13px] w-[8px]" fill="#0072c6" aria-hidden="true"><path d="M1 0h6v1.200H6.300V6H8v1.500H4.600V13H3.400V7.500H0V6h1.700V1.200H1z" /></svg>
      </button>
    </div>
  );
}

function CallButton({ label, active = false, children }: { label: string; active?: boolean; children: ReactNode }) {
  return (
    <button
      type="button"
      aria-label={label}
      className={`flex size-[33px] items-center justify-center rounded-full ${active ? "bg-[#0072c6] text-white" : "border-2 border-[#757575] text-[#757575]"}`}
    >
      <svg viewBox="0 0 20 20" className="size-[20px] shrink-0" fill="currentColor" aria-hidden="true">{children}</svg>
    </button>
  );
}

export default function App() {
  return (
    <div className={`relative flex min-h-screen flex-col overflow-hidden bg-black ${UI}`}>
      <header className="flex h-[52px] items-center pr-[15px]">
        <span className="flex-1" />
        <button type="button" className="h-[25px] w-[103px] border border-[#ababab] bg-white font-['Roboto','Open_Sans',sans-serif] text-[12px] whitespace-nowrap text-[#444]">Request Control</button>
        <span className="flex flex-1 justify-end pr-[2px]">
          <button type="button" aria-label="Full screen">
            <svg viewBox="0 0 16 14" className="h-[14px] w-[16px]" fill="none" stroke="#fff" strokeWidth="2" aria-hidden="true">
              <path d="M1 4V1h3M12 1h3v3M15 10v3h-3M4 13H1v-3M4 4h8v6H4z" />
            </svg>
          </button>
        </span>
      </header>

      <main className="flex flex-1 items-start border-y border-[#252525] bg-linear-to-r from-[#0e181a] via-[#212c2d] to-[#0e181a] pt-[56px] pb-[56px] pl-[10px]">
        <div className="relative min-w-0 flex-1 border border-[#cfcfc4] bg-[#fbf08d] p-[2px]">
          <div className="border border-[#3a3d42]">
            <TitleBar />
            <Tabs />
            <Ribbon />
            <HorizontalRuler />
            <div className="flex h-[396px] bg-linear-to-b from-[#cdd0d5] to-[#bbbec4] pl-px">
              <VerticalRuler />
              <div className="flex min-w-0 flex-1 overflow-hidden pr-[78px] pl-[80px]">
                <DocumentText />
              </div>
              <ScrollBar />
            </div>
            <StatusBar />
            <TaskBar />
          </div>
          <PresentingBar />
          <svg viewBox="0 0 8 12" className="pointer-events-none absolute right-0 bottom-[70px] h-[13px] w-[8px]" fill="#fff" stroke="#111" aria-hidden="true">
            <path d="M1 .8v9l2.200-2L4.600 11l1.600-.7L4.800 7.300h2.700z" />
          </svg>
        </div>
        <div className="flex w-[36px] shrink-0 justify-end pt-[2px] pr-[11px]">
          <button type="button" aria-label="Fit to window">
            <svg viewBox="0 0 14 14" className="size-[14px]" fill="none" stroke="#0072c6" aria-hidden="true">
              <path d="M.5.500h13v13H.5z" />
              <path d="M4 4h6v6H4z" strokeWidth="1.400" />
              <path d="M7 1l2.500 2.500h-5zM7 13l2.500-2.500h-5zM1 7l2.500-2.500v5zM13 7l-2.500-2.500v5z" fill="#0072c6" stroke="none" />
            </svg>
          </button>
        </div>
      </main>

      <footer className="flex h-[53px] items-center gap-[17px] bg-black pr-[14px] pl-[14px]">
        <CallButton label="Chat"><path d="M3 4h14v10h-6.500L7 17.500V14H3z" /></CallButton>
        <CallButton label="Call"><path d="M6.500 2.500C8 1.500 9 2 9.500 3.500l.5 2c.2 1-.5 1.600-1.500 2 .3 2.500 1.500 4.500 3 6 1-.7 2-.7 2.700 0l1.600 1.700c.8 1 .5 1.800-.8 2.600-1.500.8-3.200.5-5-1.200C6.500 13.300 4.500 9 4.700 5.500c.1-1.400.7-2.300 1.800-3z" /></CallButton>
        <CallButton label="Video">
          <circle cx="7" cy="4.500" r="3" /><circle cx="13" cy="4.500" r="3" />
          <path d="M4 7.500h11.500v9H4zM15 10.500l3.500-2v7.500l-3.500-2zM1.500 9.500H4V13H1.500z" />
        </CallButton>
        <CallButton label="Present" active>
          <path d="M1.500 4h17v10h-17zM8.500 14.500h3v1.500h-3zM5 16h10v1H5z" />
        </CallButton>
        <CallButton label="Participants">
          <circle cx="7" cy="7.500" r="3.300" />
          <path d="M2 18v-4.500c0-2 1.500-2.500 3-2.500l2 2.500L9 11c2 0 3.500.7 3.500 2.500V18z" />
          <circle cx="14.500" cy="4.500" r="3" />
          <path d="M11.500 9l1.200-.8 2 2.500 2-2.500c1.500.2 2.800 1 2.800 2.500v3.500h-5.800c0-2-.7-3.500-2.200-4.200z" />
        </CallButton>
        <span className="flex-1" />
        <button type="button" aria-label="Layout">
          <svg viewBox="0 0 23 22" className="h-[22px] w-[23px]" aria-hidden="true">
            <path d="M.6.600h15.800v13H.6z" fill="none" stroke="#757575" strokeWidth="1.200" />
            <path d="M2.500 3h12M2.500 6.500h5M2.500 9h5M2.500 11.500h5" stroke="#757575" strokeWidth="1.500" />
            <path d="M8 6h15v16H8z" fill="#757575" stroke="#000" strokeWidth=".6" />
            <circle cx="15.500" cy="11" r="2.800" fill="#000" />
            <path d="M11 19v-2.500c0-1.500 1.300-2 2.500-2l2 1.800 2-1.800c1.200 0 2.500.5 2.500 2V19z" fill="#000" />
          </svg>
        </button>
        <button type="button" aria-label="More options" className="-ml-[3px] flex gap-[4px]">
          <span className="size-[4px] rounded-full bg-[#757575]" />
          <span className="size-[4px] rounded-full bg-[#757575]" />
          <span className="size-[4px] rounded-full bg-[#757575]" />
        </button>
      </footer>

      <div className="pointer-events-none absolute top-[27px] left-[542px] h-[242px] w-[381px] border border-black/30 shadow-[0_4px_22px_rgba(0,0,0,0.5)]" />
    </div>
  );
}
